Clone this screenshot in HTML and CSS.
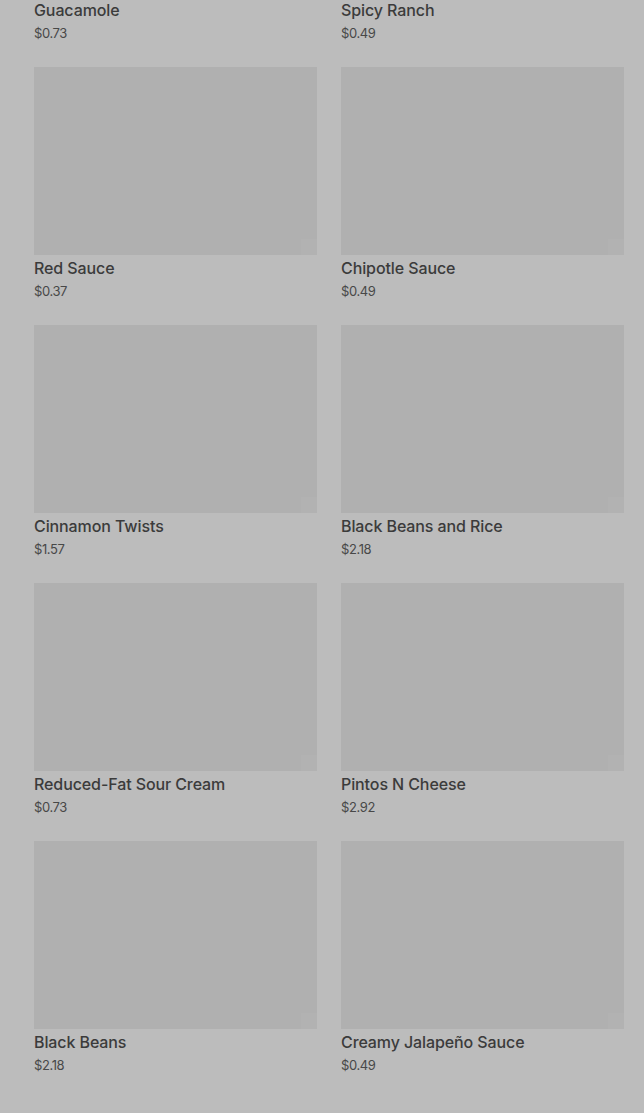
FILE: index.html
```html
<!DOCTYPE html>
<html lang="en">
<head>
    <meta charset="UTF-8">
    <meta name="viewport" content="width=device-width, initial-scale=1.0">
    <title>Menu Items</title>
    <link rel="stylesheet" href="styles.css">
</head>
<body>
    <div class="page">
        <div class="grid">
            <div class="item">
                <div class="thumb"></div>
                <div class="name">Guacamole</div>
                <div class="price">$0.73</div>
            </div>
            <div class="item">
                <div class="thumb"></div>
                <div class="name">Spicy Ranch</div>
                <div class="price">$0.49</div>
            </div>
            <div class="item">
                <div class="thumb"></div>
                <div class="name">Red Sauce</div>
                <div class="price">$0.37</div>
            </div>
            <div class="item">
                <div class="thumb"></div>
                <div class="name">Chipotle Sauce</div>
                <div class="price">$0.49</div>
            </div>
            <div class="item">
                <div class="thumb"></div>
                <div class="name">Cinnamon Twists</div>
                <div class="price">$1.57</div>
            </div>
            <div class="item">
                <div class="thumb"></div>
                <div class="name">Black Beans and Rice</div>
                <div class="price">$2.18</div>
            </div>
            <div class="item">
                <div class="thumb"></div>
                <div class="name">Reduced-Fat Sour Cream</div>
                <div class="price">$0.73</div>
            </div>
            <div class="item">
                <div class="thumb"></div>
                <div class="name">Pintos N Cheese</div>
                <div class="price">$2.92</div>
            </div>
            <div class="item">
                <div class="thumb"></div>
                <div class="name">Black Beans</div>
                <div class="price">$2.18</div>
            </div>
            <div class="item">
                <div class="thumb"></div>
                <div class="name">Creamy Jalapeño Sauce</div>
                <div class="price">$0.49</div>
            </div>
        </div>
    </div>
</body>
</html>
```

FILE: styles.css
```css
html, body {
    margin: 0;
    padding: 0;
    background-color: #bcbcbc;
    font-family: Inter, "Noto Sans", sans-serif;
    color: #3b3b3b;
}
.page {
    height: 1113px;
    overflow: hidden;
    padding: 0 20px 0 34px;
}
/* list is scrolled: first row's picture sits above the fold */
.grid {
    margin-top: -191px;
    display: grid;
    grid-template-columns: 1fr 1fr;
    column-gap: 24px;
    row-gap: 25px;
}
.thumb {
    height: 188px;
    background-color: #b0b0b0;
    position: relative;
}
.thumb::after {
    content: "";
    position: absolute;
    right: 0;
    bottom: 0;
    width: 16px;
    height: 16px;
    background-color: #b2b2b2;
}
.name {
    margin-top: 3px;
    font-size: 16px;
    line-height: 20px;
    font-weight: 500;
    letter-spacing: -0.1px;
}
.price {
    margin-top: 4px;
    font-size: 13px;
    line-height: 18px;
    letter-spacing: -0.4px;
    color: #484848;
}
```
